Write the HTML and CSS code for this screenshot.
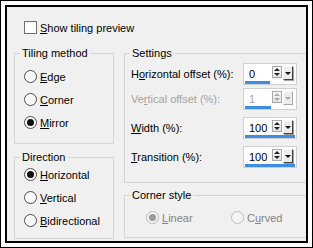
FILE: index.html
```html
<!DOCTYPE html>
<html>
<head>
<meta charset="utf-8">
<link rel="stylesheet" href="styles.css">
</head>
<body>
<div class="frame">
  <div class="panel">
    <div class="check-row"><span class="checkbox"></span><span><u>S</u>how tiling preview</span></div>
    <div class="columns">
      <div class="col">
        <div class="group g-tiling">
          <span class="group-title">Tiling method</span>
          <div class="radio-row"><span class="radio"></span><span><u>E</u>dge</span></div>
          <div class="radio-row"><span class="radio"></span><span><u>C</u>orner</span></div>
          <div class="radio-row"><span class="radio checked"></span><span><u>M</u>irror</span></div>
        </div>
        <div class="group g-direction">
          <span class="group-title">Direction</span>
          <div class="radio-row"><span class="radio checked"></span><span><u>H</u>orizontal</span></div>
          <div class="radio-row"><span class="radio"></span><span><u>V</u>ertical</span></div>
          <div class="radio-row"><span class="radio"></span><span><u>B</u>idirectional</span></div>
        </div>
      </div>
      <div class="col right">
        <div class="group g-settings">
          <span class="group-title">Settings</span>
          <div class="field-row r1">
            <span class="field-label">H<u>o</u>rizontal offset (%):</span>
            <div class="spin">
              <div class="spin-top"><span class="spin-val">0</span><span class="updown"><i class="up"></i><i class="dn"></i></span><span class="drop"><i></i></span></div>
              <div class="bar"><span class="fill" style="width:50%"></span></div>
            </div>
          </div>
          <div class="field-row r2 disabled">
            <span class="field-label">Ve<u>r</u>tical offset (%):</span>
            <div class="spin">
              <div class="spin-top"><span class="spin-val">1</span><span class="updown"><i class="up"></i><i class="dn"></i></span><span class="drop"><i></i></span></div>
              <div class="bar"><span class="fill" style="width:51%"></span></div>
            </div>
          </div>
          <div class="field-row r3">
            <span class="field-label"><u>W</u>idth (%):</span>
            <div class="spin">
              <div class="spin-top"><span class="spin-val">100</span><span class="updown"><i class="up"></i><i class="dn"></i></span><span class="drop"><i></i></span></div>
              <div class="bar"><span class="fill" style="width:100%"></span></div>
            </div>
          </div>
          <div class="field-row r4">
            <span class="field-label"><u>T</u>ransition (%):</span>
            <div class="spin">
              <div class="spin-top"><span class="spin-val">100</span><span class="updown"><i class="up"></i><i class="dn"></i></span><span class="drop"><i></i></span></div>
              <div class="bar"><span class="fill" style="width:100%"></span></div>
            </div>
          </div>
        </div>
        <div class="group g-corner">
          <span class="group-title">Corner style</span>
          <div class="corner-row">
            <div class="radio-row dis"><span class="radio checked"></span><span><u>L</u>inear</span></div>
            <div class="radio-row dis"><span class="radio"></span><span>C<u>u</u>rved</span></div>
          </div>
        </div>
      </div>
    </div>
  </div>
</div>
</body>
</html>
```
FILE: styles.css
```css
* { box-sizing: border-box; }
html, body { margin: 0; padding: 0; }
body {
  width: 313px; height: 248px; overflow: hidden; background: #fff;
  font-family: "Liberation Sans", Arial, sans-serif; font-size: 11px; color: #000;
}
u { text-decoration: underline; text-underline-offset: 1px; }
.frame { width: 313px; height: 248px; border: 1px solid #000; padding: 4px; background: #fff; }
.panel { width: 100%; height: 100%; border: 2px solid #000; background: #f0f0f0; padding-left: 7px; overflow: hidden; }

.check-row { display: flex; align-items: center; gap: 3px; margin-top: 14px; padding-left: 10px; height: 13px; }
.checkbox { width: 13px; height: 13px; border: 1px solid #6f6f6f; background: #fff; flex: none; }

.columns { display: grid; grid-template-columns: 100px 1fr; column-gap: 10px; margin-top: 19px; margin-right: -3px; }
.col { display: flex; flex-direction: column; }
.col.right { gap: 12px; }
.col:first-child { gap: 13px; }

.group { position: relative; border: 1px solid #d5d5d5; }
.group-title { position: absolute; top: -7px; left: 5px; padding: 0 2px; background: #f0f0f0; line-height: 13px; }

.g-tiling { height: 91px; padding: 11px 0 0 9px; }
.g-direction { height: 82px; padding: 5px 0 0 9px; }
.g-settings { height: 130px; padding: 9px 0 0 6px; }
.g-corner { height: 43px; padding: 10px 0 0 21px; }

.radio-row { display: flex; align-items: center; gap: 3px; height: 23px; }
.radio { width: 13px; height: 13px; border-radius: 50%; border: 1px solid #4a4a4a; background: #fff; flex: none; display: flex; align-items: center; justify-content: center; }
.radio.checked::after { content: ""; width: 7px; height: 7px; border-radius: 50%; background: #111; }

.corner-row { display: flex; }
.corner-row .radio-row:first-child { width: 85px; }
.radio-row.dis { color: #838383; }
.radio-row.dis .radio { border-color: #bcbcbc; background: #f4f4f4; }
.radio-row.dis .radio.checked::after { background: #9a9a9a; }

.field-row { display: flex; align-items: center; height: 22px; }
.field-label { width: 112px; flex: none; }
.r2 { margin-top: 3px; }
.r3 { margin-top: 7px; }
.r4 { margin-top: 7px; }
.disabled .field-label { color: #a3a3a3; }

.spin { width: 54px; height: 22px; background: #fff; border: 1px solid #d0d0d0; display: flex; flex-direction: column; justify-content: space-between; }
.spin-top { display: flex; align-items: flex-start; padding: 1px 3px 0 5px; height: 17px; }
.spin-val { flex: 1; line-height: 14px; padding-top: 2px; }
.disabled .spin-val { color: #a3a3a3; }
.updown { width: 10px; height: 12px; border: 1px solid #a8a8a8; background: linear-gradient(#fafafa, #e4e4e4); display: flex; flex-direction: column; align-items: center; justify-content: space-around; margin-right: 1px; margin-top: 1px; }
.updown i { width: 0; height: 0; border-left: 3px solid transparent; border-right: 3px solid transparent; }
.updown .up { border-bottom: 3px solid #222; }
.updown .dn { border-top: 3px solid #222; }
.disabled .updown .up { border-bottom-color: #a8a8a8; }
.disabled .updown .dn { border-top-color: #a8a8a8; }
.drop { width: 10px; height: 14px; background: #ececec; border-top: 1px solid #fff; border-left: 1px solid #fff; border-right: 1px solid #404040; border-bottom: 1px solid #404040; box-shadow: 1px 1px 0 #a0a0a0; display: flex; align-items: center; justify-content: center; margin-top: 1px; }
.drop i { width: 0; height: 0; border-left: 3px solid transparent; border-right: 3px solid transparent; border-top: 3px solid #111; }
.disabled .drop { border-right-color: #a8a8a8; border-bottom-color: #a8a8a8; box-shadow: none; }
.disabled .drop i { border-top-color: #a8a8a8; }
.bar { height: 3px; margin: 0 1px 1px 1px; }
.fill { display: block; height: 3px; background: #3d8ee3; }
```
